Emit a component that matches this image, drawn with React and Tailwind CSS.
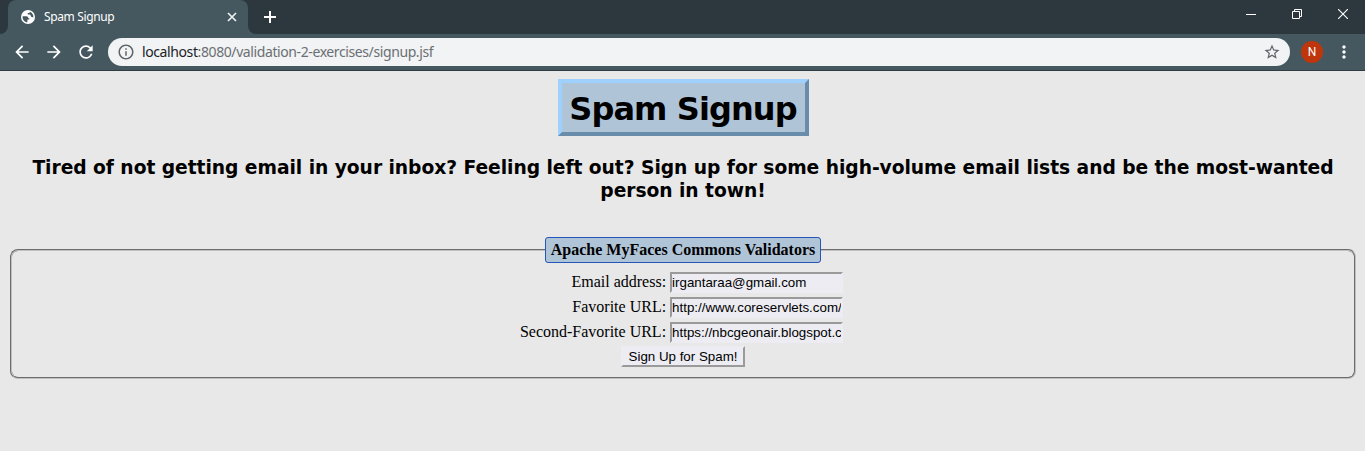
import {
  MdArrowBack,
  MdArrowForward,
  MdRefresh,
  MdStarBorder,
  MdMoreVert,
  MdInfoOutline,
} from "react-icons/md";

function Globe() {
  return (
    <svg className="size-[14px]" viewBox="0 0 14 14" fill="none">
      <circle cx="7" cy="7" r="7" fill="#fff" />
      <path
        d="M1.6 6.2h3.6c1.5 0 2.1.8 2.1 2h1v1.4H6.4v2.6c-2.9 0-5-2.400-4.800-6z"
        fill="#455860"
      />
      <path
        d="M8.600 1.800v1.300H6.700v1.500h2c.8 0 .9 1.200 1.400 1.900.5.700 1.200.900 2.300.9.200-2.500-1.300-4.800-3.800-5.600z"
        fill="#455860"
      />
    </svg>
  );
}

function TabStrip() {
  return (
    <div className="flex h-[34px] bg-[#2c383e]">
      <div className="flex w-2 shrink-0 bg-[#455860]">
        <div className="w-2 rounded-br-lg bg-[#2c383e]" />
      </div>
      <div className="flex w-[240px] shrink-0 items-center rounded-t-lg bg-[#455860] pl-[13px] pr-[10px]">
        <Globe />
        <span className="ml-[9px] flex-1 whitespace-nowrap text-[12px] leading-4 tracking-[-0.37px] text-white">
          Spam Signup
        </span>
        <svg className="size-3" viewBox="0 0 12 12" stroke="#eef1f2" strokeWidth="1.7" fill="none">
          <path d="M2 2l8 8M10 2l-8 8" />
        </svg>
      </div>
      <div className="flex w-2 shrink-0 bg-[#455860]">
        <div className="w-2 rounded-bl-lg bg-[#2c383e]" />
      </div>
      <svg className="ml-2 mt-[11px] size-3" viewBox="0 0 12 12" stroke="#fff" strokeWidth="2" fill="none">
        <path d="M6 0v12M0 6h12" />
      </svg>
      <div className="ml-auto flex pr-[17px] pt-[9px]">
        <svg className="mr-9 size-[10px]" viewBox="0 0 10 10" stroke="#fff" fill="none">
          <path d="M0 5.5h10" />
        </svg>
        <svg className="mr-9 size-[10px]" viewBox="0 0 10 10" stroke="#fff" fill="none">
          <path d="M.5 2.5h7v7h-7zM2.5 2.5v-2h7v7h-2" />
        </svg>
        <svg className="size-[10px]" viewBox="0 0 10 10" stroke="#fff" strokeWidth="1.1" fill="none">
          <path d="M0 0l10 10M10 0L0 10" />
        </svg>
      </div>
    </div>
  );
}

function Toolbar() {
  return (
    <div className="flex h-[37px] items-center border-b border-[#303c44] bg-[#455860] pl-3 pr-[11px] text-white">
      <MdArrowBack className="size-5" />
      <MdArrowForward className="ml-3 size-5" />
      <MdRefresh className="ml-3 size-5" />
      <div className="ml-3 flex h-7 flex-1 items-center rounded-full bg-[#f1f3f4] pl-[9px] pr-[9px]">
        <MdInfoOutline className="size-[18px] text-[#5f6368]" />
        <span className="ml-[7px] flex-1 whitespace-nowrap text-[14px] leading-5 tracking-[-0.4px] text-[#6b6f73]">
          <span className="text-[#202124]">localhost</span>:8080/validation-2-exercises/signup.jsf
        </span>
        <MdStarBorder className="size-[18px] text-[#5f6368]" />
      </div>
      <div className="ml-[11px] flex size-[22px] items-center justify-center rounded-full bg-[#bf360c] font-[Roboto,sans-serif] text-[12px]">
        N
      </div>
      <MdMoreVert className="ml-[11px] size-5" />
    </div>
  );
}

const fields = [
  { label: "Email address:", value: "irgantaraa@gmail.com" },
  { label: "Favorite URL:", value: "http://www.coreservlets.com/" },
  { label: "Second-Favorite URL:", value: "https://nbcgeonair.blogspot.com/" },
];

export default function App() {
  return (
    <div className="flex h-[451px] flex-col overflow-hidden bg-[#e8e8e8] text-black">
      <header className="font-['Noto_Sans',sans-serif]">
        <TabStrip />
        <Toolbar />
      </header>
      <main className="flex flex-col pl-2 pr-[7px] pt-2">
        <h1 className="flex h-[57px] w-[251px] items-center justify-center self-center whitespace-nowrap border-4 border-b-[#6a8cab] border-l-[#9fd1ff] border-r-[#6a8cab] border-t-[#9fd1ff] bg-[#b0c4d8] pt-[3px] font-['DejaVu_Sans',sans-serif] text-[32px] font-bold leading-[39px] tracking-[-0.9px]">
          Spam Signup
        </h1>
        <h2 className="mt-5 text-center font-['DejaVu_Sans',sans-serif] text-[18.7px] font-bold leading-[23px] tracking-[-0.05px]">
          Tired of not getting email in your inbox? Feeling left out? Sign up for some high-volume email lists and be the most-wanted
          <br />
          person in town!
        </h2>
        <fieldset className="mx-0.5 mt-[35px] h-[142px] rounded-lg border-2 border-[#c0c0c0] font-['Liberation_Serif',serif] text-[16px] [border-style:groove]">
          <legend className="mx-auto flex h-[26px] w-[276px] items-center justify-center whitespace-nowrap rounded-[3px] border border-[#2456b8] bg-[#b0c4d8] font-bold">
            Apache MyFaces Commons Validators
          </legend>
          <form className="flex flex-col items-center pt-[9px]" onSubmit={(e) => e.preventDefault()}>
            <div className="flex flex-col gap-1 pr-[3px]">
              {fields.map((f) => (
                <label key={f.label} className="flex h-[21px] items-center justify-end gap-1">
                  <span className="whitespace-nowrap pb-0.5 leading-[18px]">{f.label}</span>
                  <input
                    type="text"
                    defaultValue={f.value}
                    className="h-[21px] w-[173px] border-2 border-b-[#ececf2] border-l-[#9a9a9a] border-r-[#ececf2] border-t-[#9a9a9a] bg-[#ececf2] font-['Liberation_Sans',sans-serif] text-[13.33px]"
                  />
                </label>
              ))}
            </div>
            <button className="mt-[3px] flex h-[21px] w-[124px] items-center justify-center whitespace-nowrap border-2 border-b-[#9a9a9a] border-l-[#ececf2] border-r-[#9a9a9a] border-t-[#ececf2] bg-[#ececf2] font-['Liberation_Sans',sans-serif] text-[13.33px]">
              Sign Up for Spam!
            </button>
          </form>
        </fieldset>
      </main>
    </div>
  );
}
